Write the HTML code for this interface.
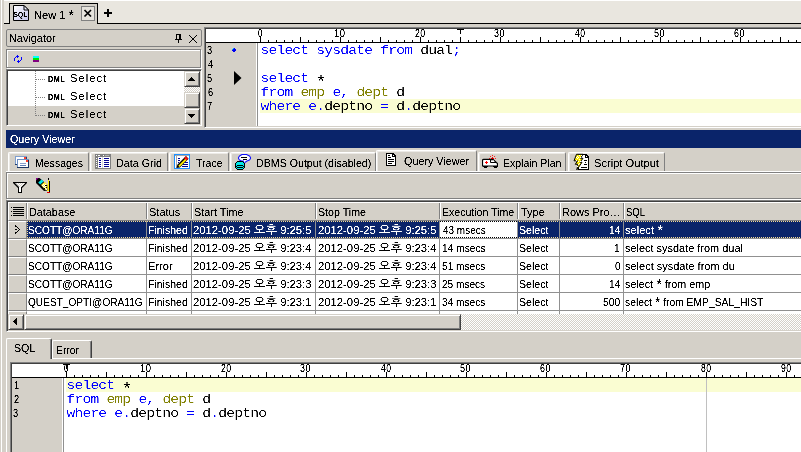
<!DOCTYPE html>
<html lang="ko"><head><meta charset="utf-8"><title>Query Viewer</title>
<style>
html,body{margin:0;padding:0}
body{width:801px;height:452px;overflow:hidden;background:#d4d0c8;position:relative;font:11px "Liberation Sans","NanumGothic",sans-serif;color:#000;line-height:1}
.a{position:absolute}
.t{position:absolute;white-space:pre;line-height:14px;height:14px;filter:url(#thr)}
.t>b{display:inline-block;font-weight:inherit;transform-origin:0 0}
.w{color:#fff}
.b{font-weight:bold}
.n{filter:url(#thb)}
.as{font-size:15px;line-height:0;vertical-align:-1px;display:inline-block;transform:scaleX(0.95)}
.ko{font-family:"Liberation Sans","NanumGothic","Noto Sans CJK KR",sans-serif;font-size:12px;line-height:10px}
.m{position:absolute;white-space:pre;font:14.667px/14px "Liberation Mono",monospace;letter-spacing:-0.8px;height:14px;filter:url(#thm);margin-left:0.4px}
.m>b{display:inline-block;font-weight:inherit;transform:scaleY(0.81);transform-origin:0 11px}
.m i{font-style:normal;display:inline-block;width:8px;font-size:20px;line-height:1px;vertical-align:-6px;text-indent:-1.5px;letter-spacing:0}
.k{color:#0000ff}.o{color:#808000}
.tab{position:absolute;box-sizing:border-box;border:1px solid #fff;border-bottom:none;border-right:1px solid #808080;background:#d4d0c8;border-radius:2px 2px 0 0;box-shadow:inset 1px 1px 0 rgba(255,255,255,.55)}
.btn{position:absolute;box-sizing:border-box;background:#d4d0c8;border:1px solid;border-color:#d4d0c8 #404040 #404040 #d4d0c8;box-shadow:inset 1px 1px 0 #fff, inset -1px -1px 0 #808080}
.dither{background-color:#fff;background-image:linear-gradient(45deg,#d4d0c8 25%,transparent 25%,transparent 75%,#d4d0c8 75%),linear-gradient(45deg,#d4d0c8 25%,transparent 25%,transparent 75%,#d4d0c8 75%);background-size:2px 2px;background-position:0 0,1px 1px}
.sunk{position:absolute;box-sizing:border-box;border:1px solid;border-color:#808080 #fff #fff #808080;box-shadow:inset 1px 1px 0 #404040, inset -1px -1px 0 #d4d0c8;background:#fff}
.etch{position:absolute;box-sizing:border-box;border:1px solid #808080;box-shadow:inset 1px 1px 0 #fff, 1px 1px 0 #fff}
.hsep{position:absolute;top:203px;width:2px;height:16px;background:linear-gradient(90deg,#808080 50%,#fff 50%)}
.vl{position:absolute;top:221px;width:1px;height:93px;background:#909090}
.hl{position:absolute;left:27px;width:774px;height:1px;background:#909090}
.ind{position:absolute;left:8px;width:19px;height:18px;box-sizing:border-box;background:#d4d0c8;border:1px solid;border-color:#fff #808080 #808080 #fff}
</style></head>
<body>
<svg class="a" width="0" height="0" style="left:0;top:0"><filter id="thr" x="-5%" y="-20%" width="125%" height="140%" color-interpolation-filters="sRGB"><feComponentTransfer><feFuncA type="linear" slope="3" intercept="-0.8"/></feComponentTransfer></filter><filter id="thm" x="-5%" y="-20%" width="110%" height="140%" color-interpolation-filters="sRGB"><feComponentTransfer><feFuncA type="linear" slope="2.6" intercept="-0.9"/></feComponentTransfer></filter><filter id="thb" x="-5%" y="-20%" width="125%" height="140%" color-interpolation-filters="sRGB"><feComponentTransfer><feFuncA type="linear" slope="3" intercept="-0.7"/></feComponentTransfer></filter></svg>
<div class="a" style="left:1px;top:0;width:1px;height:452px;background:#fff"></div>
<div class="a" style="left:4px;top:0;width:797px;height:23px;background:#e9e6df"></div>
<div class="a" style="left:4px;top:0;width:797px;height:1px;background:#fff"></div>
<div class="a" style="left:4px;top:23px;width:797px;height:1px;background:#000"></div>
<div class="a" style="left:9px;top:3px;width:89px;height:21px;box-sizing:border-box;border:1px solid #000;border-bottom:none;background:#d4d0c8"></div>
<svg class="a" style="left:13px;top:5px" width="17" height="16" viewBox="13 5 17 16"><defs><linearGradient id="g1" x1="0" y1="0" x2="1" y2="1"><stop offset="0" stop-color="#fff"/><stop offset="1" stop-color="#c4c4ee"/></linearGradient></defs><path d="M13.5 5.5h10.500l4.500 4.500v10.500h-15z" fill="url(#g1)" stroke="#000"/><path d="M24 5.500v4.500h4.500z" fill="#eef" stroke="#000" stroke-linejoin="bevel"/><text x="13.6" y="17" font-family="'Liberation Sans',sans-serif" font-size="7.5" font-weight="bold" fill="#000" textLength="13.6" lengthAdjust="spacingAndGlyphs" filter="url(#thr)">SQL</text></svg>
<div class="t" style="left:33.74px;top:8px;"><b style="transform:scaleX(1.007)">New 1 <span class="as">*</span></b></div>
<svg class="a" style="left:81px;top:6px" width="14" height="15" viewBox="81 6 14 15" shape-rendering="crispEdges"><rect x="81" y="6" width="14" height="15" fill="#808080"/><rect x="82" y="7" width="12" height="13" fill="#e6e3dc"/><path d="M84.500 10l6.500 6.500M91 10l-6.500 6.500" stroke="#000" stroke-width="1.7" fill="none" shape-rendering="auto"/></svg>
<svg class="a" style="left:103px;top:8px" width="10" height="10" viewBox="103 8 10 10" shape-rendering="crispEdges"><path d="M107 9h2v1h-2zM107 10h2v1h-2zM107 11h2v1h-2zM104 12h8v1h-8zM104 13h8v1h-8zM107 14h2v1h-2zM107 15h2v1h-2zM107 16h2v1h-2z" fill="#000"/></svg>
<div class="a" style="left:6px;top:29px;width:196px;height:18px;box-sizing:border-box;border:1px solid #808080;border-radius:2px"></div>
<div class="t" style="left:9.01px;top:31px;"><b style="transform:scaleX(0.991)">Navigator</b></div>
<svg class="a" style="left:174px;top:34px" width="9" height="10" viewBox="174 34 9 10" shape-rendering="crispEdges"><path d="M176 34h5v1h-5zM176 35h1v1h-1zM179 35h2v1h-2zM176 36h1v1h-1zM179 36h2v1h-2zM176 37h1v1h-1zM179 37h2v1h-2zM176 38h1v1h-1zM179 38h2v1h-2zM175 39h7v1h-7zM178 40h1v1h-1zM178 41h1v1h-1zM178 42h1v1h-1z" fill="#000"/></svg>
<svg class="a" style="left:189px;top:35px" width="8" height="8" viewBox="189 35 8 8" shape-rendering="crispEdges"><path d="M189 35h1v1h-1zM190 36h1v1h-1zM191 37h1v1h-1zM192 38h1v1h-1zM193 39h1v1h-1zM194 40h1v1h-1zM195 41h1v1h-1zM196 42h1v1h-1zM196 35h1v1h-1zM195 36h1v1h-1zM194 37h1v1h-1zM193 38h1v1h-1zM192 39h1v1h-1zM191 40h1v1h-1zM190 41h1v1h-1zM189 42h1v1h-1z" fill="#000"/></svg>
<div class="etch" style="left:6px;top:49px;width:195px;height:19px"></div>
<svg class="a" style="left:13px;top:54px" width="11" height="11" viewBox="13 54 11 11" shape-rendering="crispEdges"><path d="M17 55h1v1h-1zM16 56h3v1h-3zM15 57h1v1h-1zM17 57h1v1h-1zM21 57h1v1h-1zM14 58h1v1h-1zM21 58h1v1h-1zM14 59h1v1h-1zM21 59h1v1h-1zM14 60h1v1h-1zM18 60h1v1h-1zM20 60h1v1h-1zM17 61h3v1h-3zM18 62h1v1h-1z" fill="#0000ff"/></svg>
<svg class="a" style="left:33px;top:56px" width="6" height="6" viewBox="33 56 6 6" shape-rendering="crispEdges"><rect x="33" y="56" width="6" height="2" fill="#00ffff"/><rect x="33" y="58" width="6" height="2" fill="#00e800"/><rect x="33" y="60" width="6" height="2" fill="#800080"/></svg>
<div class="sunk" style="left:6px;top:69px;width:196px;height:57px"></div>
<div class="a" style="left:8px;top:106px;width:176px;height:18px;background:#d4d0c8"></div>
<svg class="a" style="left:35px;top:71px" width="12" height="53" viewBox="0 0 12 53" shape-rendering="crispEdges"><path d="M0.5 0v45" stroke="#808080" stroke-width="1" stroke-dasharray="1 1" fill="none"/><path d="M1 8.5h9M1 26.5h9M1 44.5h9" stroke="#808080" stroke-width="1" stroke-dasharray="1 1" fill="none"/></svg>
<div class="t b" style="left:47.72px;top:72px;font-size:8.5px;letter-spacing:0.6px;"><b style="transform:scaleX(0.853)">DML</b></div>
<div class="t" style="left:69.98px;top:71px;letter-spacing:1px;"><b style="transform:scaleX(1.021)">Select</b></div>
<div class="t b" style="left:47.72px;top:90px;font-size:8.5px;letter-spacing:0.6px;"><b style="transform:scaleX(0.853)">DML</b></div>
<div class="t" style="left:69.98px;top:89px;letter-spacing:1px;"><b style="transform:scaleX(1.021)">Select</b></div>
<div class="t b" style="left:47.72px;top:108px;font-size:8.5px;letter-spacing:0.6px;"><b style="transform:scaleX(0.853)">DML</b></div>
<div class="t" style="left:69.98px;top:107px;letter-spacing:1px;"><b style="transform:scaleX(1.021)">Select</b></div>
<div class="a dither" style="left:184px;top:71px;width:16px;height:53px"></div>
<div class="btn" style="left:184px;top:71px;width:16px;height:16px"></div>
<div class="btn" style="left:184px;top:92px;width:16px;height:16px"></div>
<div class="btn" style="left:184px;top:108px;width:16px;height:16px"></div>
<svg class="a" style="left:188px;top:77px" width="8" height="5" viewBox="188 77 8 5" shape-rendering="crispEdges"><path d="M191 77h1v1h-1zM190 78h3v1h-3zM189 79h5v1h-5zM188 80h7v1h-7z" fill="#000"/></svg>
<svg class="a" style="left:188px;top:114px" width="8" height="5" viewBox="188 114 8 5" shape-rendering="crispEdges"><path d="M188 114h7v1h-7zM189 115h5v1h-5zM190 116h3v1h-3zM191 117h1v1h-1z" fill="#000"/></svg>
<div class="sunk" style="left:204px;top:27px;width:599px;height:101px"></div>
<svg class="a" style="left:206px;top:29px" width="595" height="14" viewBox="0 0 595 14" shape-rendering="crispEdges"><rect x="0" y="0" width="595" height="13" fill="#fff"/><rect x="0" y="13" width="595" height="1" fill="#000"/><path d="M54 8h1v5h-1zM62 11h1v2h-1zM70 11h1v2h-1zM78 11h1v2h-1zM86 11h1v2h-1zM94 8h1v5h-1zM102 11h1v2h-1zM110 11h1v2h-1zM118 11h1v2h-1zM126 11h1v2h-1zM134 8h1v5h-1zM142 11h1v2h-1zM150 11h1v2h-1zM158 11h1v2h-1zM166 11h1v2h-1zM174 8h1v5h-1zM182 11h1v2h-1zM190 11h1v2h-1zM198 11h1v2h-1zM206 11h1v2h-1zM214 8h1v5h-1zM222 11h1v2h-1zM230 11h1v2h-1zM238 11h1v2h-1zM246 11h1v2h-1zM254 8h1v5h-1zM262 11h1v2h-1zM270 11h1v2h-1zM278 11h1v2h-1zM286 11h1v2h-1zM294 8h1v5h-1zM302 11h1v2h-1zM310 11h1v2h-1zM318 11h1v2h-1zM326 11h1v2h-1zM334 8h1v5h-1zM342 11h1v2h-1zM350 11h1v2h-1zM358 11h1v2h-1zM366 11h1v2h-1zM374 8h1v5h-1zM382 11h1v2h-1zM390 11h1v2h-1zM398 11h1v2h-1zM406 11h1v2h-1zM414 8h1v5h-1zM422 11h1v2h-1zM430 11h1v2h-1zM438 11h1v2h-1zM446 11h1v2h-1zM454 8h1v5h-1zM462 11h1v2h-1zM470 11h1v2h-1zM478 11h1v2h-1zM486 11h1v2h-1zM494 8h1v5h-1zM502 11h1v2h-1zM510 11h1v2h-1zM518 11h1v2h-1zM526 11h1v2h-1zM534 8h1v5h-1zM542 11h1v2h-1zM550 11h1v2h-1zM558 11h1v2h-1zM566 11h1v2h-1zM574 8h1v5h-1zM582 11h1v2h-1zM590 11h1v2h-1z" fill="#000"/><path d="M251 0h7v1h-7zM254 1h1v4h-1z" fill="#000"/></svg><div class="t" style="left:258.07px;top:27px;font-size:10px;letter-spacing:0.5px;"><b style="transform:scaleX(0.805)">0</b></div><div class="t" style="left:333.86px;top:27px;font-size:10px;letter-spacing:0.5px;"><b style="transform:scaleX(0.940)">10</b></div><div class="t" style="left:414.53px;top:27px;font-size:10px;letter-spacing:0.5px;"><b style="transform:scaleX(0.879)">20</b></div><div class="t" style="left:494.35px;top:27px;font-size:10px;letter-spacing:0.5px;"><b style="transform:scaleX(0.896)">30</b></div><div class="t" style="left:574.80px;top:27px;font-size:10px;letter-spacing:0.5px;"><b style="transform:scaleX(0.855)">40</b></div><div class="t" style="left:654.25px;top:27px;font-size:10px;letter-spacing:0.5px;"><b style="transform:scaleX(0.905)">50</b></div><div class="t" style="left:734.45px;top:27px;font-size:10px;letter-spacing:0.5px;"><b style="transform:scaleX(0.887)">60</b></div>
<div class="a" style="left:206px;top:43px;width:50px;height:83px;background:#d4d0c8"></div>
<div class="a" style="left:257px;top:43px;width:1px;height:83px;background:#909090"></div>
<div class="a" style="left:260px;top:99px;width:541px;height:14px;background:#fafdd2"></div>
<div class="t" style="left:207.44px;top:44px;font-size:10px;"><b style="transform:scaleX(0.920)">3</b></div>
<div class="t" style="left:207.90px;top:58px;font-size:10px;"><b style="transform:scaleX(0.920)">4</b></div>
<div class="t" style="left:207.34px;top:72px;font-size:10px;"><b style="transform:scaleX(0.920)">5</b></div>
<div class="t" style="left:207.53px;top:86px;font-size:10px;"><b style="transform:scaleX(0.920)">6</b></div>
<div class="t" style="left:207.27px;top:100px;font-size:10px;"><b style="transform:scaleX(0.920)">7</b></div>
<svg class="a" style="left:232px;top:48px" width="4" height="4" viewBox="232 48 4 4" shape-rendering="crispEdges"><path d="M233 48h2v1h-2zM232 49h4v1h-4zM232 50h4v1h-4zM233 51h2v1h-2z" fill="#0000f0"/><path d="M233 48h1v1h-1zM232 49h1v1h-1z" fill="#00b0ff"/></svg>
<svg class="a" style="left:234px;top:71px" width="8" height="14" viewBox="234 71 8 14"><path d="M234 71l7.500 7-7.500 7z" fill="#000"/></svg>
<div class="m" style="left:260px;top:43px"><b><span class="k">select sysdate from</span> dual<span class="k">;</span></b></div>
<div class="m" style="left:260px;top:71px"><b><span class="k">select</span> <i>*</i></b></div>
<div class="m" style="left:260px;top:85px"><b><span class="k">from</span> <span class="o">emp</span> <span class="k">e,</span> <span class="o">dept</span> d</b></div>
<div class="m" style="left:260px;top:99px"><b><span class="k">where e.</span>deptno <span class="k">=</span> d<span class="k">.</span>deptno</b></div>
<div class="a" style="left:6px;top:130px;width:795px;height:18px;background:#0a246a"></div>
<div class="t w" style="left:9.59px;top:132px;"><b style="transform:scaleX(0.976)">Query Viewer</b></div>
<div class="a" style="left:6px;top:171px;width:795px;height:1px;background:#fff"></div>
<div class="tab" style="left:8px;top:152px;width:81px;height:19px"></div>
<div class="t" style="left:34.64px;top:156px;"><b style="transform:scaleX(0.957)">Messages</b></div>
<div class="tab" style="left:90px;top:152px;width:78px;height:19px"></div>
<div class="t" style="left:115.92px;top:156px;"><b style="transform:scaleX(0.978)">Data Grid</b></div>
<div class="tab" style="left:169px;top:152px;width:60px;height:19px"></div>
<div class="t" style="left:196.21px;top:156px;"><b style="transform:scaleX(0.959)">Trace</b></div>
<div class="tab" style="left:230px;top:152px;width:146px;height:19px"></div>
<div class="t" style="left:255.93px;top:156px;"><b style="transform:scaleX(0.967)">DBMS Output (disabled)</b></div>
<div class="tab" style="left:478px;top:152px;width:88px;height:19px"></div>
<div class="t" style="left:502.55px;top:156px;"><b style="transform:scaleX(0.955)">Explain Plan</b></div>
<div class="tab" style="left:568px;top:152px;width:97px;height:19px"></div>
<div class="t" style="left:593.74px;top:156px;"><b style="transform:scaleX(1.012)">Script Output</b></div>
<div class="tab" style="left:376px;top:150px;width:101px;height:21px"></div>
<div class="t" style="left:404.33px;top:154px;"><b style="transform:scaleX(0.980)">Query Viewer</b></div>
<svg class="a" style="left:15px;top:156px" width="14" height="12" viewBox="15 156 14 12" shape-rendering="crispEdges"><rect x="15" y="156" width="12" height="9" fill="#7f9fcf"/><rect x="16" y="157" width="10" height="7" fill="#fff"/><rect x="15" y="164" width="12" height="1" fill="#27406b"/><rect x="26" y="157" width="1" height="8" fill="#27406b"/><rect x="24" y="157" width="2" height="2" fill="#ff3c28"/><rect x="17" y="159" width="12" height="9" fill="#6e8fc4"/><rect x="18" y="160" width="10" height="7" fill="#fff"/><rect x="17" y="167" width="12" height="1" fill="#1c3560"/><rect x="28" y="160" width="1" height="8" fill="#1c3560"/><rect x="26" y="160" width="2" height="2" fill="#ff3c28"/><rect x="20" y="163" width="6" height="1" fill="#8aa0cc"/><rect x="20" y="165" width="6" height="1" fill="#5f7fb8"/></svg>
<svg class="a" style="left:95px;top:154px" width="16" height="15" viewBox="95 154 16 15" shape-rendering="crispEdges"><rect x="95" y="154" width="16" height="15" fill="#808080"/><rect x="98" y="157" width="12" height="11" fill="#fff"/><rect x="102" y="157" width="1" height="11" fill="#d8d8d8"/><path d="M96 155h1v1h-1zM98 155h2v1h-2zM103 155h1v1h-1z" fill="#fff"/><path d="M105 155h4v1h-4z" fill="#b0b0b0"/><path d="M96 158h1v1h-1zM96 160h1v1h-1zM96 162h1v1h-1zM96 164h1v1h-1zM96 166h1v1h-1z" fill="#fff"/><path d="M99 158h2v1h-2zM99 160h2v1h-2zM99 162h2v1h-2zM99 164h2v1h-2zM99 166h2v1h-2zM104 158h5v1h-5zM104 160h5v1h-5zM104 162h5v1h-5zM104 164h5v1h-5zM104 166h5v1h-5z" fill="#000090"/></svg>
<svg class="a" style="left:174px;top:154px" width="16" height="15" viewBox="174 154 16 15" shape-rendering="crispEdges"><rect x="174" y="154" width="16" height="15" fill="#1e90ff"/><rect x="175" y="155" width="14" height="13" fill="#fff"/><rect x="175" y="155" width="14" height="1" fill="#a8a8a8"/><rect x="176" y="155" width="1" height="13" fill="#a8a8a8"/><path d="M175 156h1v1h-1zM175 158h1v1h-1zM175 160h1v1h-1zM175 162h1v1h-1zM175 164h1v1h-1zM175 166h1v1h-1z" fill="#fff"/><path d="M178 158h2v1h-2zM178 160h2v1h-2zM178 162h1v1h-1zM185 162h3v1h-3zM183 164h5v1h-5zM182 166h6v1h-6z" fill="#000090"/><g shape-rendering="auto"><path d="M176.500 168l0.800-3.200 8.700-8.700 2.600 2.600-8.700 8.700z" fill="#000"/><path d="M178.300 165.700l7.200-7.200 1.300 1.300-7.200 7.200z" fill="#ffee00"/><path d="M185.800 156.300l2.400 2.400-1.700 1.700-2.400-2.400z" fill="#ff1010"/></g></svg>
<svg class="a" style="left:234px;top:153px" width="18" height="18" viewBox="234 153 18 18" shape-rendering="crispEdges"><g shape-rendering="auto"><path d="M242 154.500L246.500 154.500 249.500 156 250.500 157.500 250.500 158.500 249.500 160 247 161 245.500 162 243.500 164.500 243.500 161 241.500 161 239.500 160 238.500 158.500 238.500 157.500 239.500 156z" fill="#fff" stroke="#1010ff" stroke-width="1.100" stroke-linejoin="round"/></g><path d="M241 157h6v1h-6zM243 159h4v1h-4z" fill="#000"/><rect x="237" y="161" width="6" height="1" fill="#000"/><rect x="236" y="162" width="1" height="1" fill="#000"/><rect x="237" y="162" width="6" height="1" fill="#00e8e8"/><rect x="243" y="162" width="1" height="1" fill="#000"/><rect x="235" y="163" width="1" height="1" fill="#000"/><rect x="236" y="163" width="8" height="1" fill="#00e8e8"/><rect x="244" y="163" width="1" height="1" fill="#000"/><rect x="235" y="164" width="1" height="1" fill="#000"/><rect x="236" y="164" width="8" height="1" fill="#00e8e8"/><rect x="244" y="164" width="1" height="1" fill="#000"/><rect x="235" y="165" width="1" height="1" fill="#000"/><rect x="236" y="165" width="1" height="1" fill="#00e8e8"/><rect x="237" y="165" width="6" height="1" fill="#000"/><rect x="243" y="165" width="1" height="1" fill="#00e8e8"/><rect x="244" y="165" width="1" height="1" fill="#000"/><rect x="235" y="166" width="2" height="1" fill="#000"/><rect x="237" y="166" width="6" height="1" fill="#00e8e8"/><rect x="243" y="166" width="2" height="1" fill="#000"/><rect x="235" y="167" width="1" height="1" fill="#000"/><rect x="236" y="167" width="1" height="1" fill="#00e8e8"/><rect x="237" y="167" width="6" height="1" fill="#000"/><rect x="243" y="167" width="1" height="1" fill="#00e8e8"/><rect x="244" y="167" width="1" height="1" fill="#000"/><rect x="236" y="168" width="1" height="1" fill="#000"/><rect x="237" y="168" width="6" height="1" fill="#00e8e8"/><rect x="243" y="168" width="1" height="1" fill="#000"/><rect x="237" y="169" width="6" height="1" fill="#000"/></svg>
<svg class="a" style="left:386px;top:153px" width="10" height="13" viewBox="386 153 10 13" shape-rendering="crispEdges"><path d="M386 153h7l3 3v10h-10z" fill="#000"/><path d="M387 154h5v3h3v8h-8z" fill="#fff"/><path d="M393 155h1v1h-1z" fill="#fff"/><path d="M388 155h2v1h-2zM388 157h3v1h-3zM388 159h6v1h-6zM388 161h6v1h-6zM388 163h4v1h-4z" fill="#000"/></svg>
<svg class="a" style="left:482px;top:154px" width="16" height="14" viewBox="482 154 16 14" shape-rendering="crispEdges"><path d="M492 155h1v1h-1zM490 156h1v1h-1zM494 156h1v1h-1zM489 158h1v1h-1zM495 158h1v1h-1z" fill="#ff2020"/><path d="M492 157h1v1h-1zM491 158h3v1h-3z" fill="#ff0000"/><g shape-rendering="auto"><path d="M482.500 160.500q0-1.200 1.200-1.200h9.300l4.500 4.200v2.500h-15z" fill="#fff" stroke="#000" stroke-width="1.200"/><path d="M490.500 159.500v3h6" fill="none" stroke="#000" stroke-width="1"/></g><path d="M491 160h3v1h-3z" fill="#b8b8b8"/><path d="M486 161h1v1h-1zM485 162h3v1h-3zM486 163h1v1h-1z" fill="#ff0000"/><path d="M483 166h5v1h-5zM484 167h3v1h-3zM493 166h5v1h-5zM494 167h3v1h-3z" fill="#000"/></svg>
<svg class="a" style="left:573px;top:153px" width="17" height="17" viewBox="573 153 17 17" shape-rendering="crispEdges"><path d="M578 154h8l3 3v13h-11z" fill="#000"/><path d="M579 155h6v3h3v11h-9z" fill="#fff"/><path d="M586 156h1v1h-1z" fill="#fff"/><path d="M584 160h3v1h-3zM585 162h1v1h-1zM584 164h3v1h-3zM581 167h6v1h-6z" fill="#000"/><g shape-rendering="auto"><path d="M576.5 154.3h6.5l-2.500 4h2.500l-3 4h2l-5.200 7.500 1.300-5.500h-2.800l2.200-3.500h-3.500z" fill="#ffee00" stroke="#000" stroke-width="1" stroke-linejoin="round"/></g><path d="M577 156h1v1h-1zM579 155h1v1h-1zM581 155h1v1h-1zM576 157h1v1h-1zM578 157h1v1h-1zM580 157h1v1h-1zM577 158h1v1h-1zM579 159h1v1h-1zM576 160h1v1h-1zM578 161h1v1h-1zM580 161h1v1h-1zM579 163h1v1h-1zM578 164h1v1h-1zM577 166h1v1h-1z" fill="#fff"/></svg>
<div class="etch" style="left:6px;top:172px;width:800px;height:27px"></div>
<svg class="a" style="left:12px;top:181px" width="17" height="13" viewBox="12 181 17 13"><path d="M13 182 27 182 27 183 22 188 22 193 18 193 18 188 13 183z" fill="#000"/><path d="M15 183 25 183 21 187 21 192 19 192 19 187z" fill="#fff"/><path d="M16 183h1v1h-1zM18 183h1v1h-1zM20 183h1v1h-1zM22 183h1v1h-1zM24 183h1v1h-1zM17 184h1v1h-1zM19 184h1v1h-1zM21 184h1v1h-1zM23 184h1v1h-1zM18 185h1v1h-1zM20 185h1v1h-1zM22 185h1v1h-1zM19 186h1v1h-1zM21 186h1v1h-1z" fill="#d4d0c8"/></svg>
<svg class="a" style="left:35px;top:177px" width="16" height="17" viewBox="35 177 16 17"><path d="M36 178 39.5 178 43 181 47.5 185 47.5 190.5 44 191 36 183z" fill="#000"/><path d="M36 178 38.5 178 36 180.5z" fill="#900090"/><path d="M38.2 182.6 41.6 179.4 43.6 181.4 40.2 184.6z" fill="#00e8e8"/><path d="M41 185 44.5 181.8 47.5 184.6 47.5 189.6 45.3 190z" fill="#ffef3a"/><path d="M43 184h1v1h-1zM45 184h1v1h-1zM42 185h1v1h-1zM44 185h1v1h-1zM43 186h1v1h-1zM45 186h1v1h-1zM44 187h1v1h-1zM46 187h1v1h-1zM45 188h1v1h-1zM46 189h1v1h-1z" fill="#fff"/><path d="M45 185h2v1h-2zM46 187h1v1h-1zM44 188h1v1h-1z" fill="#000"/><rect x="48" y="180" width="1" height="10" fill="#ffee00"/><rect x="49" y="181" width="1" height="11" fill="#000"/><rect x="48" y="178" width="1" height="2" fill="#000"/><rect x="47" y="190" width="2" height="1" fill="#ffee00"/><rect x="47" y="192" width="3" height="1" fill="#e00000"/></svg>
<div class="sunk" style="left:6px;top:200px;width:800px;height:132px"></div>
<div class="a" style="left:8px;top:202px;width:793px;height:19px;box-sizing:border-box;background:#d4d0c8;border-top:1px solid #fff;border-left:1px solid #fff;border-bottom:1px solid #808080"></div>
<svg class="a" style="left:11px;top:207px" width="14" height="9" viewBox="11 207 14 9" shape-rendering="crispEdges"><path d="M11 207h1v1h-1zM11 211h1v1h-1zM11 215h1v1h-1zM13 207h11v1h-11zM13 209h11v1h-11zM13 211h11v1h-11zM13 213h11v1h-11zM13 215h11v1h-11z" fill="#000"/></svg>
<div class="hsep" style="left:26px"></div>
<div class="hsep" style="left:146px"></div>
<div class="hsep" style="left:191px"></div>
<div class="hsep" style="left:315px"></div>
<div class="hsep" style="left:439px"></div>
<div class="hsep" style="left:517px"></div>
<div class="hsep" style="left:559px"></div>
<div class="hsep" style="left:623px"></div>
<div class="t" style="left:28.77px;top:205px;"><b style="transform:scaleX(0.984)">Database</b></div>
<div class="t" style="left:149.00px;top:205px;"><b style="transform:scaleX(1.000)">Status</b></div>
<div class="t" style="left:193.76px;top:205px;"><b style="transform:scaleX(0.987)">Start Time</b></div>
<div class="t" style="left:317.78px;top:205px;"><b style="transform:scaleX(0.969)">Stop Time</b></div>
<div class="t" style="left:442.14px;top:205px;"><b style="transform:scaleX(0.958)">Execution Time</b></div>
<div class="t" style="left:521.20px;top:205px;"><b style="transform:scaleX(0.999)">Type</b></div>
<div class="t" style="left:561.75px;top:205px;"><b style="transform:scaleX(0.996)">Rows Pro…</b></div>
<div class="t" style="left:626.04px;top:205px;"><b style="transform:scaleX(0.864)">SQL</b></div>
<div class="a" style="left:27px;top:221px;width:774px;height:93px;background:#fff"></div>
<div class="a" style="left:27px;top:221px;width:774px;height:17px;background:#0a246a"></div>
<div class="a" style="left:27px;top:221px;width:774px;height:1px;background:repeating-linear-gradient(90deg,#f5db95 0 1px,#0a246a 1px 2px)"></div>
<div class="a" style="left:27px;top:237px;width:774px;height:1px;background:repeating-linear-gradient(90deg,#f5db95 0 1px,#0a246a 1px 2px)"></div>
<div class="a" style="left:27px;top:221px;width:1px;height:17px;background:repeating-linear-gradient(180deg,#f5db95 0 1px,#0a246a 1px 2px)"></div>
<div class="a" style="left:440px;top:221px;width:77px;height:17px;box-sizing:border-box;background:#fff;border-top:1px dotted #000;border-bottom:1px dotted #000"></div>
<div class="hl" style="top:238px"></div>
<div class="hl" style="top:256px"></div>
<div class="hl" style="top:274px"></div>
<div class="hl" style="top:292px"></div>
<div class="hl" style="top:310px"></div>
<div class="vl" style="left:146px"></div>
<div class="vl" style="left:191px"></div>
<div class="vl" style="left:315px"></div>
<div class="vl" style="left:439px"></div>
<div class="vl" style="left:517px"></div>
<div class="vl" style="left:559px"></div>
<div class="vl" style="left:623px"></div>
<div class="ind" style="top:221px"></div>
<div class="ind" style="top:239px"></div>
<div class="ind" style="top:257px"></div>
<div class="ind" style="top:275px"></div>
<div class="ind" style="top:293px"></div>
<div class="ind" style="top:311px;height:3px;border-bottom:none"></div>
<svg class="a" style="left:15px;top:225px" width="5" height="9" viewBox="15 225 5 9" shape-rendering="crispEdges"><path d="M15 225h1v1h-1zM15 226h2v1h-2zM17 227h1v1h-1zM18 228h1v1h-1zM15 229h2v1h-2zM19 229h1v1h-1zM18 230h1v1h-1zM17 231h1v1h-1zM15 232h2v1h-2zM15 233h1v1h-1z" fill="#000"/></svg>
<div class="t w" style="left:28.08px;top:223px;"><b style="transform:scaleX(0.918)">SCOTT@ORA11G</b></div>
<div class="t w" style="left:147.79px;top:223px;"><b style="transform:scaleX(0.956)">Finished</b></div>
<div class="t w" style="left:193.27px;top:223px;"><b style="transform:scaleX(1.026)">2012-09-25 <span class="ko">오후</span> 9:25:5</b></div>
<div class="t w" style="left:317.62px;top:223px;"><b style="transform:scaleX(1.026)">2012-09-25 <span class="ko">오후</span> 9:25:5</b></div>
<div class="t" style="left:442.50px;top:223px;"><b style="transform:scaleX(0.907)">43 msecs</b></div>
<div class="t w" style="left:519.04px;top:223px;"><b style="transform:scaleX(0.960)">Select</b></div>
<div class="t w" style="left:609.07px;top:223px;"><b style="transform:scaleX(0.930)">14</b></div>
<div class="t w" style="left:624.94px;top:223px;"><b style="transform:scaleX(1.008)">select <span class="as">*</span></b></div>
<div class="t" style="left:28.08px;top:241px;"><b style="transform:scaleX(0.918)">SCOTT@ORA11G</b></div>
<div class="t" style="left:147.79px;top:241px;"><b style="transform:scaleX(0.956)">Finished</b></div>
<div class="t" style="left:193.27px;top:241px;"><b style="transform:scaleX(1.026)">2012-09-25 <span class="ko">오후</span> 9:23:4</b></div>
<div class="t" style="left:317.62px;top:241px;"><b style="transform:scaleX(1.026)">2012-09-25 <span class="ko">오후</span> 9:23:4</b></div>
<div class="t" style="left:441.57px;top:241px;"><b style="transform:scaleX(0.926)">14 msecs</b></div>
<div class="t" style="left:519.04px;top:241px;"><b style="transform:scaleX(0.960)">Select</b></div>
<div class="t" style="left:614.22px;top:241px;"><b style="transform:scaleX(0.930)">1</b></div>
<div class="t" style="left:624.95px;top:241px;"><b style="transform:scaleX(0.994)">select sysdate from dual</b></div>
<div class="t" style="left:28.08px;top:259px;"><b style="transform:scaleX(0.918)">SCOTT@ORA11G</b></div>
<div class="t" style="left:147.74px;top:259px;"><b style="transform:scaleX(1.011)">Error</b></div>
<div class="t" style="left:193.27px;top:259px;"><b style="transform:scaleX(1.026)">2012-09-25 <span class="ko">오후</span> 9:23:4</b></div>
<div class="t" style="left:317.62px;top:259px;"><b style="transform:scaleX(1.026)">2012-09-25 <span class="ko">오후</span> 9:23:4</b></div>
<div class="t" style="left:441.84px;top:259px;"><b style="transform:scaleX(0.921)">51 msecs</b></div>
<div class="t" style="left:519.04px;top:259px;"><b style="transform:scaleX(0.960)">Select</b></div>
<div class="t" style="left:614.81px;top:259px;"><b style="transform:scaleX(0.930)">0</b></div>
<div class="t" style="left:624.95px;top:259px;"><b style="transform:scaleX(0.998)">select sysdate from du</b></div>
<div class="t" style="left:28.08px;top:277px;"><b style="transform:scaleX(0.918)">SCOTT@ORA11G</b></div>
<div class="t" style="left:147.79px;top:277px;"><b style="transform:scaleX(0.956)">Finished</b></div>
<div class="t" style="left:193.27px;top:277px;"><b style="transform:scaleX(1.026)">2012-09-25 <span class="ko">오후</span> 9:23:3</b></div>
<div class="t" style="left:317.62px;top:277px;"><b style="transform:scaleX(1.026)">2012-09-25 <span class="ko">오후</span> 9:23:3</b></div>
<div class="t" style="left:442.08px;top:277px;"><b style="transform:scaleX(0.916)">25 msecs</b></div>
<div class="t" style="left:519.04px;top:277px;"><b style="transform:scaleX(0.960)">Select</b></div>
<div class="t" style="left:609.07px;top:277px;"><b style="transform:scaleX(0.930)">14</b></div>
<div class="t" style="left:624.96px;top:277px;"><b style="transform:scaleX(0.978)">select <span class="as">*</span> from emp</b></div>
<div class="t" style="left:28.36px;top:295px;"><b style="transform:scaleX(0.920)">QUEST_OPTI@ORA11G</b></div>
<div class="t" style="left:147.79px;top:295px;"><b style="transform:scaleX(0.956)">Finished</b></div>
<div class="t" style="left:193.27px;top:295px;"><b style="transform:scaleX(1.026)">2012-09-25 <span class="ko">오후</span> 9:23:1</b></div>
<div class="t" style="left:317.62px;top:295px;"><b style="transform:scaleX(1.026)">2012-09-25 <span class="ko">오후</span> 9:23:1</b></div>
<div class="t" style="left:441.86px;top:295px;"><b style="transform:scaleX(0.920)">34 msecs</b></div>
<div class="t" style="left:519.04px;top:295px;"><b style="transform:scaleX(0.960)">Select</b></div>
<div class="t" style="left:602.54px;top:295px;"><b style="transform:scaleX(0.930)">500</b></div>
<div class="t" style="left:624.98px;top:295px;"><b style="transform:scaleX(0.937)">select <span class="as">*</span> from EMP_SAL_HIST</b></div>
<div class="a dither" style="left:8px;top:314px;width:793px;height:16px"></div>
<div class="btn" style="left:8px;top:314px;width:16px;height:16px"></div>
<div class="btn" style="left:24px;top:314px;width:437px;height:16px"></div>
<svg class="a" style="left:13px;top:318px" width="5" height="7" viewBox="13 318 5 7" shape-rendering="crispEdges"><path d="M16 318h1v1h-1zM15 319h2v1h-2zM14 320h3v1h-3zM13 321h4v1h-4zM14 322h3v1h-3zM15 323h2v1h-2zM16 324h1v1h-1z" fill="#000"/></svg>
<div class="a" style="left:6px;top:358px;width:795px;height:1px;background:#fff"></div>
<div class="a" style="left:6px;top:340px;width:1px;height:112px;background:#fff"></div>
<div class="tab" style="left:52px;top:340px;width:40px;height:18px;border-right-color:#404040;box-shadow:inset -1px 0 0 #808080"></div>
<div class="t" style="left:55.66px;top:343px;"><b style="transform:scaleX(0.939)">Error</b></div>
<div class="tab" style="left:6px;top:338px;width:46px;height:21px;border-right-color:#404040;box-shadow:inset -1px 0 0 #808080"></div>
<div class="t" style="left:13.73px;top:341px;"><b style="transform:scaleX(0.969)">SQL</b></div>
<div class="sunk" style="left:10px;top:362px;width:795px;height:95px"></div>
<svg class="a" style="left:12px;top:364px" width="789" height="14" viewBox="0 0 789 14" shape-rendering="crispEdges"><rect x="0" y="0" width="789" height="13" fill="#fff"/><rect x="0" y="13" width="789" height="1" fill="#000"/><path d="M54 8h1v5h-1zM62 11h1v2h-1zM70 11h1v2h-1zM78 11h1v2h-1zM86 11h1v2h-1zM94 8h1v5h-1zM102 11h1v2h-1zM110 11h1v2h-1zM118 11h1v2h-1zM126 11h1v2h-1zM134 8h1v5h-1zM142 11h1v2h-1zM150 11h1v2h-1zM158 11h1v2h-1zM166 11h1v2h-1zM174 8h1v5h-1zM182 11h1v2h-1zM190 11h1v2h-1zM198 11h1v2h-1zM206 11h1v2h-1zM214 8h1v5h-1zM222 11h1v2h-1zM230 11h1v2h-1zM238 11h1v2h-1zM246 11h1v2h-1zM254 8h1v5h-1zM262 11h1v2h-1zM270 11h1v2h-1zM278 11h1v2h-1zM286 11h1v2h-1zM294 8h1v5h-1zM302 11h1v2h-1zM310 11h1v2h-1zM318 11h1v2h-1zM326 11h1v2h-1zM334 8h1v5h-1zM342 11h1v2h-1zM350 11h1v2h-1zM358 11h1v2h-1zM366 11h1v2h-1zM374 8h1v5h-1zM382 11h1v2h-1zM390 11h1v2h-1zM398 11h1v2h-1zM406 11h1v2h-1zM414 8h1v5h-1zM422 11h1v2h-1zM430 11h1v2h-1zM438 11h1v2h-1zM446 11h1v2h-1zM454 8h1v5h-1zM462 11h1v2h-1zM470 11h1v2h-1zM478 11h1v2h-1zM486 11h1v2h-1zM494 8h1v5h-1zM502 11h1v2h-1zM510 11h1v2h-1zM518 11h1v2h-1zM526 11h1v2h-1zM534 8h1v5h-1zM542 11h1v2h-1zM550 11h1v2h-1zM558 11h1v2h-1zM566 11h1v2h-1zM574 8h1v5h-1zM582 11h1v2h-1zM590 11h1v2h-1zM598 11h1v2h-1zM606 11h1v2h-1zM614 8h1v5h-1zM622 11h1v2h-1zM630 11h1v2h-1zM638 11h1v2h-1zM646 11h1v2h-1zM654 8h1v5h-1zM662 11h1v2h-1zM670 11h1v2h-1zM678 11h1v2h-1zM686 11h1v2h-1zM694 8h1v5h-1zM702 11h1v2h-1zM710 11h1v2h-1zM718 11h1v2h-1zM726 11h1v2h-1zM734 8h1v5h-1zM742 11h1v2h-1zM750 11h1v2h-1zM758 11h1v2h-1zM766 11h1v2h-1zM774 8h1v5h-1zM782 11h1v2h-1z" fill="#000"/><path d="M51 0h7v1h-7zM54 1h1v4h-1z" fill="#000"/></svg><div class="t" style="left:64.07px;top:362px;font-size:10px;letter-spacing:0.5px;"><b style="transform:scaleX(0.805)">0</b></div><div class="t" style="left:139.86px;top:362px;font-size:10px;letter-spacing:0.5px;"><b style="transform:scaleX(0.940)">10</b></div><div class="t" style="left:220.53px;top:362px;font-size:10px;letter-spacing:0.5px;"><b style="transform:scaleX(0.879)">20</b></div><div class="t" style="left:300.35px;top:362px;font-size:10px;letter-spacing:0.5px;"><b style="transform:scaleX(0.896)">30</b></div><div class="t" style="left:380.80px;top:362px;font-size:10px;letter-spacing:0.5px;"><b style="transform:scaleX(0.855)">40</b></div><div class="t" style="left:460.25px;top:362px;font-size:10px;letter-spacing:0.5px;"><b style="transform:scaleX(0.905)">50</b></div><div class="t" style="left:540.45px;top:362px;font-size:10px;letter-spacing:0.5px;"><b style="transform:scaleX(0.887)">60</b></div><div class="t" style="left:620.17px;top:362px;font-size:10px;letter-spacing:0.5px;"><b style="transform:scaleX(0.911)">70</b></div><div class="t" style="left:700.66px;top:362px;font-size:10px;letter-spacing:0.5px;"><b style="transform:scaleX(0.867)">80</b></div><div class="t" style="left:780.55px;top:362px;font-size:10px;letter-spacing:0.5px;"><b style="transform:scaleX(0.877)">90</b></div>
<div class="a" style="left:12px;top:378px;width:50px;height:74px;background:#d4d0c8"></div>
<div class="a" style="left:63px;top:378px;width:1px;height:74px;background:#909090"></div>
<div class="a" style="left:66px;top:378px;width:735px;height:14px;background:#fafdd2"></div>
<div class="a" style="left:706px;top:378px;width:1px;height:74px;background:#c0c0c0"></div>
<div class="t" style="left:13.68px;top:379px;font-size:10px;"><b style="transform:scaleX(0.920)">1</b></div>
<div class="t" style="left:13.62px;top:393px;font-size:10px;"><b style="transform:scaleX(0.920)">2</b></div>
<div class="t" style="left:13.44px;top:407px;font-size:10px;"><b style="transform:scaleX(0.920)">3</b></div>
<div class="m" style="left:66px;top:378px"><b><span class="k">select</span> <i>*</i></b></div>
<div class="m" style="left:66px;top:392px"><b><span class="k">from</span> <span class="o">emp</span> <span class="k">e,</span> <span class="o">dept</span> d</b></div>
<div class="m" style="left:66px;top:406px"><b><span class="k">where e.</span>deptno <span class="k">=</span> d<span class="k">.</span>deptno</b></div>
</body></html>
